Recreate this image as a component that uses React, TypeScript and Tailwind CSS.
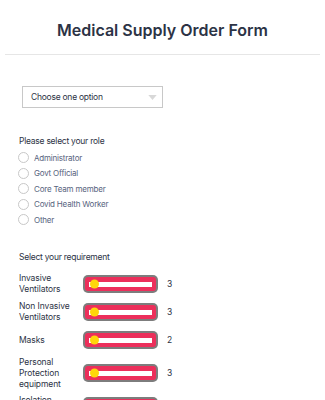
import React from "react";

const roles = ["Administrator", "Govt Official", "Core Team member", "Covid Health Worker", "Other"];

const items = [
    { label: ["Invasive", "Ventilators"], value: 3, knob: 0 },
    { label: ["Non Invasive", "Ventilators"], value: 3, knob: 0 },
    { label: ["Masks"], value: 2, knob: 0 },
    { label: ["Personal", "Protection", "equipment"], value: 3, knob: 0 },
    { label: ["Isolation", "Beds"], value: 7, knob: 1 },
];

function Slider({ knob }: { knob: number }) {
    return (
        <div className="w-[75px] h-[18px] rounded-[5px] bg-[#7d7d7d] p-[2px] shrink-0">
            <div className="relative h-full w-full rounded-[3px] bg-[#ec2f5b] flex items-center px-[4px]">
                <div className="h-[5px] w-full bg-white" />
                <div
                    className={
                        "absolute top-1/2 -translate-y-1/2 h-[9px] w-[9px] rounded-full bg-[#ffd60a] " +
                        (knob ? "left-[12px]" : "left-[5px]")
                    }
                />
            </div>
        </div>
    );
}

export default function App() {
    return (
        <div className="w-[325px] bg-white font-['Inter',sans-serif] text-[#2c3345]">
            {/* header */}
            <div className="mx-[5px] border-b border-[#e6e6e6] pt-[19px] pb-[13px] text-center">
                <h1 className="text-[16px] font-semibold leading-[22px]">Medical Supply Order Form</h1>
            </div>

            {/* dropdown */}
            <div className="pl-[22px] pt-[31px]">
                <div className="flex h-[22px] w-[141px] items-center justify-between border border-[#c8c8c8] pl-[8px] pr-[5px]">
                    <span className="text-[8.5px] tracking-[-0.25px] text-[#2c3345]">Choose one option</span>
                    <svg width="9" height="5" viewBox="0 0 10 6">
                        <path d="M0 0h10L5 6z" fill="#d8d8d8" />
                    </svg>
                </div>
            </div>

            {/* role */}
            <div className="pl-[19px] pt-[27px]">
                <div className="text-[8.5px] leading-[12px] tracking-[-0.25px]">Please select your role</div>
                <div className="mt-[3px] flex flex-col">
                    {roles.map((r) => (
                        <label key={r} className="flex h-[15.5px] items-center gap-[5px]">
                            <span className="ml-[-1px] h-[11px] w-[11px] rounded-full border border-[#c8c8c8]" />
                            <span className="text-[8px] tracking-[-0.2px] text-[#57647e]">{r}</span>
                        </label>
                    ))}
                </div>
            </div>

            {/* requirements */}
            <div className="pl-[19px] pt-[23px]">
                <div className="text-[8.5px] leading-[12px] tracking-[-0.25px]">Select your requirement</div>
                <div className="mt-[10px] flex flex-col gap-[5px]">
                    {items.map((it) => (
                        <div key={it.label.join(" ")} className="flex min-h-[23px] items-center">
                            <div className="w-[64px] text-[8.5px] leading-[11px] tracking-[-0.1px]">
                                {it.label.map((l) => (
                                    <div key={l}>{l}</div>
                                ))}
                            </div>
                            <Slider knob={it.knob} />
                            <span className="ml-[9px] text-[8.5px]">{it.value}</span>
                        </div>
                    ))}
                </div>
            </div>
        </div>
    );
}
